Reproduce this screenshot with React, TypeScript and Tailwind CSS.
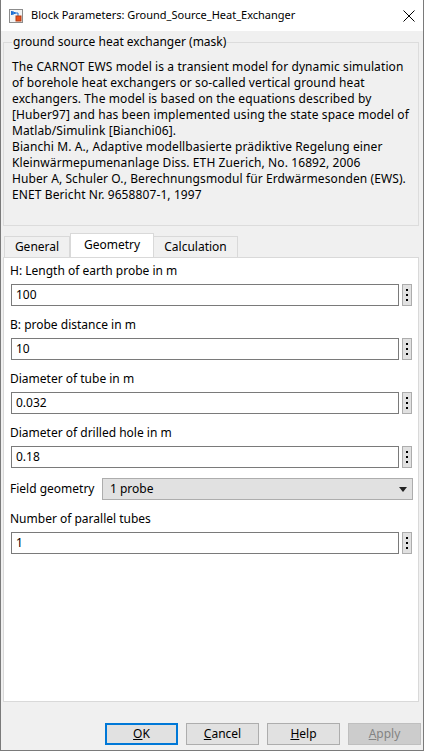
import React from "react";

const font = { fontFamily: '"Noto Sans", "Open Sans", sans-serif' };

function Dots() {
  return (
    <div className="w-[10px] h-[22px] ml-[3px] bg-[#e1e1e1] border border-[#adadad] flex flex-col items-center justify-center gap-[3px]">
      <div className="w-[2px] h-[2px] bg-black" />
      <div className="w-[2px] h-[2px] bg-black" />
      <div className="w-[2px] h-[2px] bg-black" />
    </div>
  );
}

function Field({ label, value }: { label: string; value: string }) {
  return (
    <div className="flex flex-col">
      <div className="h-[16px] leading-[16px] text-[12px] text-black pl-[6px] whitespace-nowrap">{label}</div>
      <div className="flex mt-[5px] ml-[7px]">
        <div className="w-[388px] h-[22px] border border-[#7a7a7a] bg-white flex items-center pl-[4px] text-[12px] leading-[16px]">
          {value}
        </div>
        <Dots />
      </div>
    </div>
  );
}

function Btn({ children, variant }: { children: React.ReactNode; variant?: "default" | "disabled" }) {
  const cls =
    variant === "default"
      ? "border-2 border-[#0078d7] bg-[#e1e1e1] text-black"
      : variant === "disabled"
      ? "border border-[#bfbfbf] bg-[#cccccc] text-[#838383]"
      : "border border-[#adadad] bg-[#e1e1e1] text-black";
  return (
    <div className={`w-[73px] h-[22px] flex items-center justify-center text-[12px] ${cls}`}>{children}</div>
  );
}

export default function App() {
  const lines = [
    "The CARNOT EWS model is a transient model for dynamic simulation",
    "of borehole heat exchangers or so-called vertical ground heat",
    "exchangers. The model is based on the equations described by",
    "[Huber97] and has been implemented using the state space model of",
    "Matlab/Simulink [Bianchi06].",
    "Bianchi M. A., Adaptive modellbasierte prädiktive Regelung einer",
    "Kleinwärmepumenanlage Diss. ETH Zuerich, No. 16892, 2006",
    "Huber A, Schuler O., Berechnungsmodul für Erdwärmesonden (EWS).",
    "ENET Bericht Nr. 9658807-1, 1997",
  ];
  return (
    <div
      className="w-[424px] h-[751px] bg-[#f0f0f0] border-l border-r border-b border-[#7a7a7a] flex flex-col overflow-hidden"
      style={font}
    >
      {/* title bar */}
      <div className="h-[31px] bg-white flex items-center shrink-0">
        <svg className="ml-[8px]" width="14" height="14" viewBox="0 0 14 14">
          <rect x="0.5" y="0.5" width="13" height="13" fill="#f4f4f4" stroke="#8c8c8c" />
          <path d="M2.5 2 V6 M3.5 2.5 L6.5 4 L3.5 5.5 Z" stroke="#1f6fd1" strokeWidth="1" fill="#3d8ee8" />
          <path d="M6 4 H9 V7" stroke="#1f6fd1" strokeWidth="1" fill="none" />
          <rect x="7" y="7" width="5" height="5" fill="#e8501c" stroke="#b23a10" strokeWidth="1" />
        </svg>
        <div className="ml-[8px] text-[11px] text-black whitespace-nowrap">Block Parameters: Ground_Source_Heat_Exchanger</div>
        <div className="flex-1" />
        <svg className="mr-[8px]" width="12" height="12" viewBox="0 0 12 12">
          <path d="M0.5 0.5 L11.5 11.5 M11.5 0.5 L0.5 11.5" stroke="#000" strokeWidth="1" />
        </svg>
      </div>

      {/* group box */}
      <fieldset className="ml-[2px] mt-[3px] w-[416px] border border-[#dcdcdc] pl-[8px] pt-[9px] pb-[22px] m-0">
        <legend className="ml-0 px-[1px] h-[16px] leading-[16px] text-[12px] text-black whitespace-nowrap">
          ground source heat exchanger (mask)
        </legend>
        <div className="text-[12px] leading-[16px] text-black tracking-[0.1px]">
          {lines.map((l, i) => (
            <div key={i} className="whitespace-nowrap">
              {l}
            </div>
          ))}
        </div>
      </fieldset>

      {/* tabs */}
      <div className="ml-[3px] mt-[7px] flex items-end h-[24px] text-[12px] text-black">
        <div className="w-[66px] h-[21px] border border-b-0 border-[#d9d9d9] bg-[#f0f0f0] flex items-center justify-center">
          General
        </div>
        <div className="w-[84px] h-[24px] border border-b-0 border-[#d9d9d9] bg-white flex items-center justify-center pb-[2px]">
          Geometry
        </div>
        <div className="w-[84px] h-[21px] border border-b-0 border-l-0 border-[#d9d9d9] bg-[#f0f0f0] flex items-center justify-center">
          Calculation
        </div>
      </div>

      {/* panel */}
      <div className="ml-[2px] w-[416px] h-[445px] bg-white border border-[#d9d9d9] pt-[5px] flex flex-col gap-[11px]">
        <Field label="H: Length of earth probe in m" value="100" />
        <Field label="B: probe distance in m" value="10" />
        <Field label="Diameter of tube in m" value="0.032" />
        <Field label="Diameter of drilled hole in m" value="0.18" />
        <div className="flex items-center h-[22px] -mt-[1px]">
          <div className="pl-[6px] w-[98px] text-[12px] whitespace-nowrap">Field geometry</div>
          <div className="w-[311px] h-[22px] border border-[#adadad] bg-[#e1e1e1] flex items-center pl-[7px] text-[12px]">
            <span className="flex-1">1 probe</span>
            <svg className="mr-[5px]" width="8" height="5" viewBox="0 0 8 5">
              <path d="M0 0 H8 L4 5 Z" fill="#222" />
            </svg>
          </div>
        </div>
        <Field label="Number of parallel tubes" value="1" />
      </div>

      {/* buttons */}
      <div className="mt-[21px] flex justify-end gap-[8px] mr-[2px]">
        <Btn variant="default">
          <span><u>O</u>K</span>
        </Btn>
        <Btn>
          <span><u>C</u>ancel</span>
        </Btn>
        <Btn>
          <span><u>H</u>elp</span>
        </Btn>
        <Btn variant="disabled">
          <span><u>A</u>pply</span>
        </Btn>
      </div>
    </div>
  );
}
